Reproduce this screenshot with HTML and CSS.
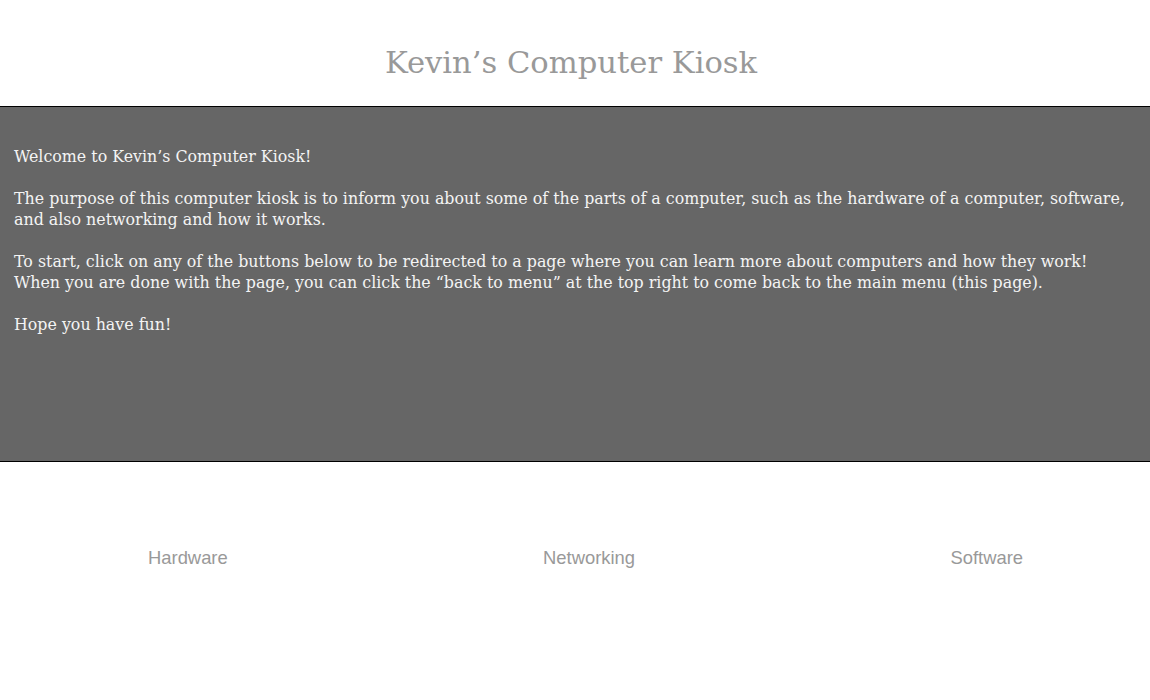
FILE: index.html
```html
<!DOCTYPE html>
<html>
<head>
<meta charset="utf-8">
<link rel="stylesheet" href="styles.css">
</head>
<body>
<header class="top">
  <h1 class="title">Kevin’s Computer Kiosk</h1>
</header>
<section class="intro">
  <p>Welcome to Kevin’s Computer Kiosk!</p>
  <p>The purpose of this computer kiosk is to inform you about some of the parts of a computer, such as the hardware of a computer, software, and also networking and how it works.</p>
  <p>To start, click on any of the buttons below to be redirected to a page where you can learn more about computers and how they work!<br>When you are done with the page, you can click the “back to menu” at the top right to come back to the main menu (this page).</p>
  <p>Hope you have fun!</p>
</section>
<nav class="menu">
  <a class="btn">Hardware</a>
  <a class="btn">Networking</a>
  <a class="btn">Software</a>
</nav>
</body>
</html>
```
FILE: styles.css
```css
html, body {
  margin: 0;
  padding: 0;
  background: #fff;
}
.top {
  height: 106px;
  display: flex;
  align-items: center;
  justify-content: center;
}
.title {
  margin: 0;
  padding: 18px 8px 0 0;
  font-family: "DejaVu Serif", serif;
  font-weight: normal;
  font-size: 30.6px;
  color: #999;
}
.intro {
  background: #666;
  border-top: 1px solid #000;
  border-bottom: 1px solid #000;
  height: 356px;
  box-sizing: border-box;
  padding: 39px 14px 0;
  font-family: "DejaVu Serif", serif;
  font-size: 15.85px;
  line-height: 21px;
  color: #f4f4f4;
}
.intro p {
  margin: 0 0 21px;
}
.menu {
  display: flex;
  justify-content: space-between;
  padding: 85px 127px 0 148px;
}
.btn {
  font-family: "Liberation Sans", Arial, sans-serif;
  font-size: 18.4px;
  color: #999;
}
```
